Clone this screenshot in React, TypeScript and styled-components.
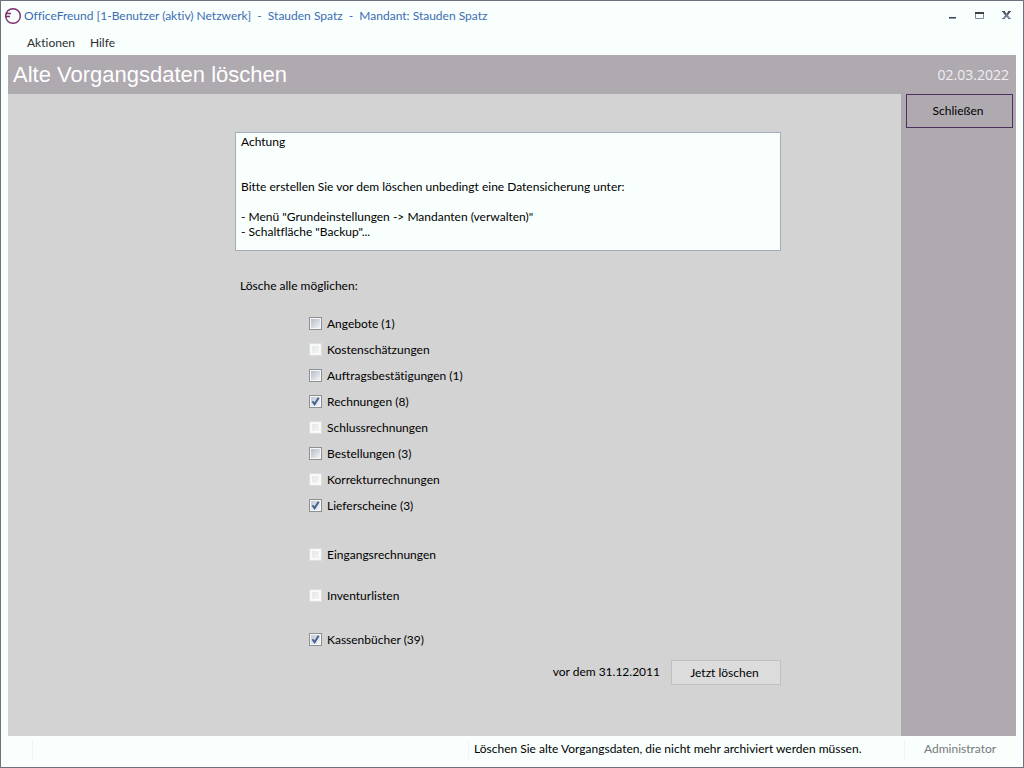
import React from "react";
import styled, { createGlobalStyle } from "styled-components";

const GlobalStyle = createGlobalStyle`
  * { box-sizing: border-box; }
  body { margin: 0; background: #f8fffd; }
  body, button, textarea, input {
    font-family: Lato, "Open Sans", sans-serif;
    font-size: 12px;
    line-height: 15px;
    font-variant-ligatures: none;
    color: #000;
  }
`;

const Window = styled.div`
  min-height: 100vh;
  display: flex;
  flex-direction: column;
  padding: 0 7px;
  background: #f8fffd;
  border: 1px solid #6f717f;
`;

const TitleBar = styled.header`
  display: flex;
  align-items: center;
  height: 30px;
  margin: 0 -3px 0 -4px;
  color: #3c6cb4;
`;

const WindowTitle = styled.h1`
  flex: 1;
  margin: 0 0 0 2px;
  padding-bottom: 2px;
  font-size: 12px;
  line-height: 15px;
  font-weight: 400;
  white-space: pre;
`;

const WindowControls = styled.div`
  display: flex;
  gap: 3px;
`;

const ControlButton = styled.button`
  width: 24px;
  height: 20px;
  padding: 0;
  border: 0;
  background: none;
  svg { display: block; margin: 0 auto; }
`;

const MenuBar = styled.nav`
  display: flex;
  align-items: center;
  gap: 15px;
  height: 24px;
  padding: 0 0 2px 19px;
`;

const MenuButton = styled.button`
  padding: 0;
  border: 0;
  background: none;
  color: #2e2e34;
`;

const PageHeader = styled.div`
  display: flex;
  align-items: center;
  justify-content: space-between;
  height: 39px;
  padding: 0 7px 0 5px;
  background: #afa9b0;
  color: #fff;
`;

const PageTitle = styled.h2`
  margin: 0;
  font-family: "Liberation Sans", Arial, sans-serif;
  font-size: 22px;
  line-height: 24px;
  font-weight: 400;
`;

const HeaderDate = styled.time`
  font-family: "Open Sans", sans-serif;
  font-size: 14px;
  line-height: 18px;
  color: #f0eef1;
`;

const Body = styled.div`
  flex: 1;
  display: flex;
`;

const Content = styled.main`
  flex: 1;
  padding: 38px 120px 50px 227px;
  background: #d3d3d3;
`;

const Sidebar = styled.aside`
  width: 115px;
  padding: 0 3px 0 5px;
  background: #afa9b0;
`;

const CloseButton = styled.button`
  width: 100%;
  height: 34px;
  padding: 0 3px 2px 0;
  border: 1px solid #4f2f5c;
  background: #afa9b0;
`;

const Notice = styled.textarea`
  display: block;
  width: 100%;
  height: 119px;
  padding: 1px 5px;
  border: 1px solid #a3adba;
  background: #f8fffd;
  resize: none;
  outline: 0;
  overflow: hidden;
`;

const Options = styled.fieldset`
  margin: 0;
  padding: 0 0 0 74px;
  border: 0;
`;

const OptionsLegend = styled.legend`
  margin-left: -69px;
  padding: 27px 0 17px;
`;

const Group = styled.div<{ $gap: number }>`
  margin-bottom: ${(p) => p.$gap}px;
`;

const OptionRow = styled.label`
  display: flex;
  align-items: center;
  gap: 5px;
  height: 26px;
`;

const Tick = styled.input`
  appearance: none;
  width: 13px;
  height: 13px;
  margin: 0;
  border: 1px solid #8e8f93;
  background: linear-gradient(135deg, #b4bcc7, #f3f4f5) center / 9px 9px no-repeat #f6f8f8;
  box-shadow: inset 0 0 0 1px #f6f8f8;
  &:checked {
    background:
      url("data:image/svg+xml,%3Csvg xmlns='http://www.w3.org/2000/svg' viewBox='0 0 11 11'%3E%3Cpath d='M2.5 5.2 4.6 8.2 8.6 1.8' fill='none' stroke='%23435f93' stroke-width='2'/%3E%3C/svg%3E") center / 11px 11px no-repeat,
      linear-gradient(135deg, #c3cad3, #f3f4f5) center / 9px 9px no-repeat #f6f8f8;
  }
  &:disabled {
    border-color: #dcdee0;
    background: linear-gradient(135deg, #e6e7e9, #f3f3f3) center / 7px 7px no-repeat #fafcfc;
  }
`;

const Actions = styled.div`
  display: flex;
  align-items: center;
  justify-content: flex-end;
  gap: 11px;
`;

const DeleteButton = styled.button`
  width: 110px;
  height: 25px;
  padding: 0 3px 1px 0;
  border: 1px solid #bfbfbf;
  background: #dcdcdc;
`;

const ActionText = styled.span`
  padding-bottom: 2px;
`;

const StatusBar = styled.footer`
  display: flex;
  align-items: center;
  height: 31px;
  padding-bottom: 5px;
`;

const StatusCell = styled.div<{ $width?: number; $muted?: boolean }>`
  ${(p) => (p.$width ? `width: ${p.$width}px;` : "flex: 1;")}
  height: 19px;
  padding: 1px 0 3px ${(p) => (p.$muted ? 19 : 5)}px;
  border-left: 1px solid #f3f1f1;
  color: ${(p) => (p.$muted ? "#77777b" : "#000")};
  white-space: nowrap;
  &:first-child { border-left-color: transparent; }
`;

type Option = { label: string; checked?: boolean; disabled?: boolean };

const groups: { gap: number; options: Option[] }[] = [
  {
    gap: 23,
    options: [
      { label: "Angebote (1)" },
      { label: "Kostenschätzungen", disabled: true },
      { label: "Auftragsbestätigungen (1)" },
      { label: "Rechnungen (8)", checked: true },
      { label: "Schlussrechnungen", disabled: true },
      { label: "Bestellungen (3)" },
      { label: "Korrekturrechnungen", disabled: true },
      { label: "Lieferscheine (3)", checked: true },
    ],
  },
  { gap: 15, options: [{ label: "Eingangsrechnungen", disabled: true }] },
  { gap: 18, options: [{ label: "Inventurlisten", disabled: true }] },
  { gap: 8, options: [{ label: "Kassenbücher (39)", checked: true }] },
];

const notice = `Achtung


Bitte erstellen Sie vor dem löschen unbedingt eine Datensicherung unter:

- Menü "Grundeinstellungen -> Mandanten (verwalten)"
- Schaltfläche "Backup"...`;

const Logo = () => (
  <svg width="18" height="18" viewBox="0 0 18 18" fill="none" stroke="#7d2c6e" aria-hidden="true">
    <circle cx="9" cy="9" r="7.3" strokeWidth="1.4" />
    <path d="M2.500 6.500H7M1.500 9.500H6" strokeWidth="1.3" />
  </svg>
);

export default function App() {
  return (
    <Window>
      <GlobalStyle />
      <TitleBar>
        <Logo />
        <WindowTitle>
          {"OfficeFreund [1-Benutzer (aktiv) Netzwerk]  -  Stauden Spatz  -  Mandant: Stauden Spatz"}
        </WindowTitle>
        <WindowControls>
          <ControlButton aria-label="Minimieren">
            <svg width="10" height="10" viewBox="0 0 10 10">
              <path d="M1 6h7v1H1z" fill="#41434b" />
              <path d="M1 7h7v1H1z" fill="#8a96ad" />
            </svg>
          </ControlButton>
          <ControlButton aria-label="Maximieren">
            <svg width="10" height="10" viewBox="0 0 10 10">
              <path d="M.5 1.500V7.500H8.500V1.500" fill="none" stroke="#7b879e" />
              <path d="M0 1h9v2H0z" fill="#41434b" />
            </svg>
          </ControlButton>
          <ControlButton aria-label="Fenster schließen">
            <svg width="10" height="10" viewBox="0 0 10 10" fill="none" strokeWidth="2">
              <path d="M1.500 .5 4.500 4.500 7.500 .5" stroke="#4b4e58" />
              <path d="M1.500 8 4.500 4 7.500 8" stroke="#76829a" />
              <path d="M0 .5H3M6 .5H9" stroke="#4b4e58" strokeWidth="1" />
              <path d="M0 7.500H3M6 7.500H9" stroke="#76829a" strokeWidth="1" />
            </svg>
          </ControlButton>
        </WindowControls>
      </TitleBar>
      <MenuBar>
        <MenuButton>Aktionen</MenuButton>
        <MenuButton>Hilfe</MenuButton>
      </MenuBar>
      <PageHeader>
        <PageTitle>Alte Vorgangsdaten löschen</PageTitle>
        <HeaderDate dateTime="2022-03-02">02.03.2022</HeaderDate>
      </PageHeader>
      <Body>
        <Content>
          <Notice readOnly aria-label="Hinweis" value={notice} />
          <Options>
            <OptionsLegend>Lösche alle möglichen:</OptionsLegend>
            {groups.map((group, i) => (
              <Group key={i} $gap={group.gap}>
                {group.options.map((o) => (
                  <OptionRow key={o.label}>
                    <Tick type="checkbox" defaultChecked={o.checked} disabled={o.disabled} />
                    {o.label}
                  </OptionRow>
                ))}
              </Group>
            ))}
          </Options>
          <Actions>
            <ActionText>vor dem 31.12.2011</ActionText>
            <DeleteButton>Jetzt löschen</DeleteButton>
          </Actions>
        </Content>
        <Sidebar>
          <CloseButton>Schließen</CloseButton>
        </Sidebar>
      </Body>
      <StatusBar>
        <StatusCell $width={24} />
        <StatusCell />
        <StatusCell $width={436}>
          Löschen Sie alte Vorgangsdaten, die nicht mehr archiviert werden müssen.
        </StatusCell>
        <StatusCell $width={112} $muted>Administrator</StatusCell>
      </StatusBar>
    </Window>
  );
}
